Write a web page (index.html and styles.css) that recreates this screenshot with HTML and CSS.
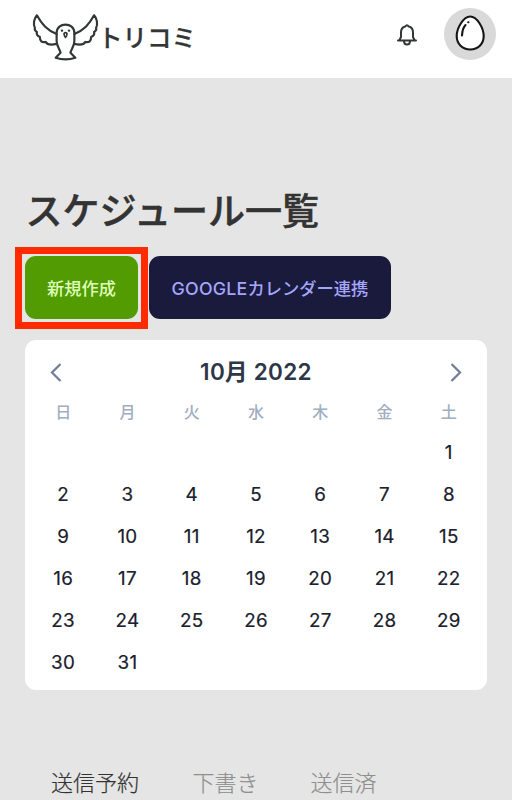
FILE: index.html
```html
<!DOCTYPE html>
<html lang="ja">
<head>
<meta charset="utf-8">
<meta name="viewport" content="width=device-width">
<title>トリコミ</title>
<link rel="stylesheet" href="styles.css">
</head>
<body>
<header class="header">
  <a class="brand">
    <svg class="bird" viewBox="0 0 72 54" fill="none" stroke="#333636" stroke-width="2.2" stroke-linejoin="round" stroke-linecap="round">
      <path d="M27 23C17 19 12 13 7 4C4 7 3 13 5 17C4 19 6 20 7 21C6 24 8 25 10 26C10 30 12 32 16 31C18 35 23 34 27 33"/>
      <path d="M45 23C55 19 60 13 65 4C68 7 69 13 67 17C68 19 66 20 65 21C66 24 64 25 62 26C62 30 60 32 56 31C54 35 49 34 45 33"/>
      <path d="M27 22C27 10.500 45 10.500 45 22V30C45 35 42 38 41 42L46 47Q36 50.500 26 47L31 42C30 38 27 35 27 30Z"/>
      <path d="M34.500 22.500Q36 20.500 37.500 22.500Q37.500 25 36 26.500Q34.500 25 34.500 22.500Z" stroke-width="1.700"/>
      <path d="M32.400 19.500h.1M39.500 19.500h.1" stroke-width="2.400"/>
    </svg>
    <span class="brand-name">トリコミ</span>
  </a>
  <svg class="bell" viewBox="0 0 22 24" fill="none" stroke="#333636" stroke-width="2" stroke-linecap="round" stroke-linejoin="round">
    <path d="M2 17.500H20M3.500 17L5 14V9.500C5 6 7 4 9.300 3.500Q11 1 12.700 3.500C15 4 17 6 17 9.500V14L18.500 17M8 18Q8 21.500 11 21.500Q14 21.500 14 18"/>
  </svg>
  <div class="avatar">
    <svg class="egg" viewBox="0 0 32 38" fill="#fff" stroke="#151515" stroke-width="2.1" stroke-linecap="round">
      <path d="M16.200 2.500C9.500 2.500 2.700 14 2.700 22C2.700 30 8.500 35.500 16.200 35.500C24 35.500 29.700 30 29.700 22C29.700 14 23 2.500 16.200 2.500Z"/>
      <path d="M11.500 11Q8.500 14 8 21.500M14.200 8.300h.2" fill="none"/>
    </svg>
  </div>
</header>
<main class="main">
  <h1 class="title">スケジュール一覧</h1>
  <div class="actions">
    <div class="highlight"><button class="btn btn-create">新規作成</button></div>
    <button class="btn btn-google"><span class="latin">GOOGLE</span>カレンダー連携</button>
  </div>
  <section class="calendar">
    <div class="cal-head">
      <svg class="arrow" viewBox="0 0 14 20"><path d="M11.500 2L3 10.500L11.500 19"/></svg>
      <h2 class="cal-title">10月 2022</h2>
      <svg class="arrow" viewBox="0 0 14 20"><path d="M2.500 2L11 10.500L2.500 19"/></svg>
    </div>
    <div class="week">
      <span>日</span><span>月</span><span>火</span><span>水</span><span>木</span><span>金</span><span>土</span>
    </div>
    <div class="days">
      <span class="first">1</span>
      <span>2</span><span>3</span><span>4</span><span>5</span><span>6</span><span>7</span><span>8</span>
      <span>9</span><span>10</span><span>11</span><span>12</span><span>13</span><span>14</span><span>15</span>
      <span>16</span><span>17</span><span>18</span><span>19</span><span>20</span><span>21</span><span>22</span>
      <span>23</span><span>24</span><span>25</span><span>26</span><span>27</span><span>28</span><span>29</span>
      <span>30</span><span>31</span>
    </div>
  </section>
  <nav class="tabs">
    <a class="tab active">送信予約</a><a class="tab">下書き</a><a class="tab">送信済</a>
  </nav>
</main>
</body>
</html>
```
FILE: styles.css
```css
* { box-sizing: border-box; }
body {
  margin: 0;
  height: 800px;
  overflow: hidden;
  background: #e5e5e5;
  color: #333636;
  font-family: Inter, "Noto Sans CJK JP", sans-serif;
}
h1, h2 { margin: 0; }
.header {
  display: flex;
  align-items: center;
  height: 78px;
  padding: 0 16px 0 30px;
  background: #fff;
}
.brand { display: flex; align-items: center; margin-right: auto; }
.bird { width: 71px; height: 54px; margin-top: -2px; }
.brand-name { margin-left: -3px; margin-top: -2px; font-size: 24.500px; font-weight: 500; line-height: 30px; -webkit-text-stroke: .25px; }
.bell { width: 22px; height: 24px; margin: -8px 26px 0 0; }
.avatar {
  display: grid;
  place-items: center;
  width: 52px;
  height: 52px;
  margin-top: -11px;
  border-radius: 50%;
  background: #d9d9d9;
}
.egg { width: 32px; height: 38px; margin-top: -1px; }
.main { padding: 111px 25px 0; }
.title { margin-left: .5px; font-size: 37px; font-weight: 500; line-height: 46px; white-space: nowrap; color: #333; -webkit-text-stroke: .5px; }
.actions { display: flex; align-items: flex-start; gap: 1px; margin: 12px 0 11px -10px; height: 82px; }
.highlight { border: 7px solid #ff2a00; padding: 2px 3px; height: 82px; width: 133px; }
.btn {
  display: block;
  height: 63px;
  padding: 0;
  border: 0;
  border-radius: 11px;
  font: 500 17.200px/65px Inter, "Noto Sans CJK JP", sans-serif;
  white-space: nowrap;
}
.btn-create { width: 113px; background: #529b03; color: #deffb8; }
.btn-google { width: 242px; margin-top: 9px; background: #1a1a3d; color: #a5a6fb; font-size: 17.300px; }
.latin { font-size: 17.800px; letter-spacing: .2px; }
.calendar {
  height: 350px;
  padding: 10px 6px 6px;
  border-radius: 11px;
  background: #fff;
}
.cal-head { display: flex; align-items: center; justify-content: space-between; height: 43px; padding: 0 18px; }
.arrow { width: 14px; height: 20px; fill: none; stroke: #718096; stroke-width: 2.300; }
.cal-title { font-size: 22.500px; font-weight: 600; line-height: 43px; letter-spacing: .3px; color: #2d3748; }
.week, .days { display: grid; grid-template-columns: repeat(7, 1fr); text-align: center; }
.week { height: 38px; font-size: 16px; font-weight: 500; line-height: 38px; color: #a0aec0; }
.days { grid-auto-rows: 42px; font-size: 18.800px; font-weight: 400; line-height: 44px; letter-spacing: .3px; color: #1a202c; -webkit-text-stroke: .2px; }
.first { grid-column: 7; }
.tabs { display: flex; margin-top: 71px; line-height: 40px; font-size: 22px; font-family: "Noto Sans CJK JP", sans-serif; font-weight: 300; -webkit-text-stroke: .2px; }
.tab { padding: 0 26px; color: #8f8f8f; }
.active { padding-right: 27.500px; color: #333; }
```
